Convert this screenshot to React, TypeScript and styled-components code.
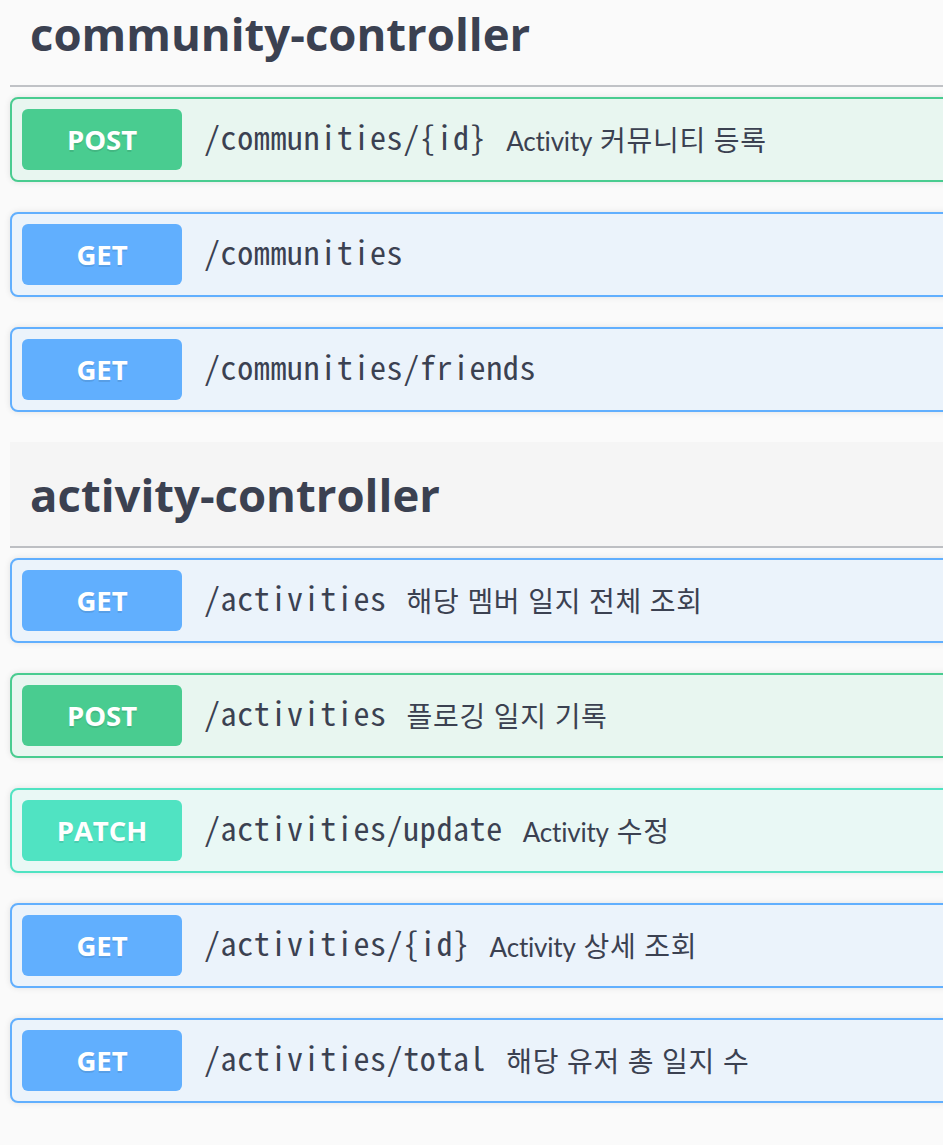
import React, { FC } from "react";
import styled, { createGlobalStyle } from "styled-components";

type Method = "GET" | "POST" | "PATCH";

interface Endpoint {
  method: Method;
  path: string;
  summary?: string;
}

interface Tag {
  name: string;
  hovered?: boolean;
  endpoints: Endpoint[];
}

const colors: Record<Method, { main: string; bg: string }> = {
  GET: { main: "#61affe", bg: "#ebf3fb" },
  POST: { main: "#49cc90", bg: "#e8f6f0" },
  PATCH: { main: "#50e3c2", bg: "#e9f8f5" },
};

const tags: Tag[] = [
  {
    name: "community-controller",
    endpoints: [
      { method: "POST", path: "/communities/{id}", summary: "Activity 커뮤니티 등록" },
      { method: "GET", path: "/communities" },
      { method: "GET", path: "/communities/friends" },
    ],
  },
  {
    name: "activity-controller",
    hovered: true,
    endpoints: [
      { method: "GET", path: "/activities", summary: "해당 멤버 일지 전체 조회" },
      { method: "POST", path: "/activities", summary: "플로깅 일지 기록" },
      { method: "PATCH", path: "/activities/update", summary: "Activity 수정" },
      { method: "GET", path: "/activities/{id}", summary: "Activity 상세 조회" },
      { method: "GET", path: "/activities/total", summary: "해당 유저 총 일지 수" },
    ],
  },
];

const GlobalStyle = createGlobalStyle`
  html, body {
    margin: 0;
    padding: 0;
    background: #fafafa;
    overflow: hidden;
  }
  body {
    font-family: "Open Sans", "Noto Sans CJK KR", sans-serif;
    color: #3b4151;
  }
`;

const Page = styled.div`
  width: 1300px;
  padding: 0 0 0 10px;
  margin-top: -19px;
`;

const Section = styled.section`
  margin-bottom: 30px;
`;

const TagHeader = styled.h3<{ $hovered?: boolean }>`
  margin: 0 0 10px;
  height: 106px;
  display: flex;
  align-items: center;
  padding: 0 40px 0 20px;
  box-sizing: border-box;
  font-size: 45.5px;
  font-weight: 700;
  color: #3b4151;
  border-bottom: 2px solid rgba(59, 65, 81, 0.3);
  background: ${(p) => (p.$hovered ? "rgba(0, 0, 0, 0.02)" : "transparent")};
`;

const Block = styled.div<{ $method: Method }>`
  display: flex;
  align-items: center;
  padding: 10px;
  margin-bottom: 30px;
  border: 2px solid ${(p) => colors[p.$method].main};
  background: ${(p) => colors[p.$method].bg};
  border-radius: 8px;
  box-shadow: 0 0 6px rgba(0, 0, 0, 0.1);
  &:last-child {
    margin-bottom: 0;
  }
`;

const Badge = styled.span<{ $method: Method }>`
  width: 160px;
  height: 61px;
  flex-shrink: 0;
  display: flex;
  align-items: center;
  justify-content: center;
  border-radius: 6px;
  background: ${(p) => colors[p.$method].main};
  color: #fff;
  font-size: 27.5px;
  font-weight: 700;
  text-shadow: 0 2px 0 rgba(0, 0, 0, 0.1);
`;

const Path = styled.span`
  padding: 0 0 8px 22px;
  font-family: "Noto Sans Mono CJK KR", "Liberation Mono", monospace;
  font-size: 32px;
  font-weight: 400;
  color: #3b4151;
  letter-spacing: 0.6px;
`;

const Summary = styled.span`
  padding: 0 0 2px 20px;
  font-family: Lato, "Noto Sans CJK KR", sans-serif;
  font-size: 28px;
  letter-spacing: 0.7px;
  color: #3b4151;
`;

// latin words in the summary render a bit narrower than the hangul
const LatinRun = styled.span`
  font-size: 26px;
  letter-spacing: -0.2px;
`;

const splitRuns = (text: string) => text.split(/([A-Za-z]+)/).filter(Boolean);

const EndpointRow: FC<{ endpoint: Endpoint }> = ({ endpoint }) => (
  <Block $method={endpoint.method}>
    <Badge $method={endpoint.method}>{endpoint.method}</Badge>
    <Path>{endpoint.path}</Path>
    {endpoint.summary && (
      <Summary>
        {splitRuns(endpoint.summary).map((run, i) =>
          /[A-Za-z]/.test(run) ? <LatinRun key={i}>{run}</LatinRun> : run
        )}
      </Summary>
    )}
  </Block>
);

const App: FC = () => (
  <>
    <GlobalStyle />
    <Page>
      {tags.map((tag) => (
        <Section key={tag.name}>
          <TagHeader $hovered={tag.hovered}>{tag.name}</TagHeader>
          {tag.endpoints.map((e) => (
            <EndpointRow key={e.method + e.path} endpoint={e} />
          ))}
        </Section>
      ))}
    </Page>
  </>
);

export default App;
